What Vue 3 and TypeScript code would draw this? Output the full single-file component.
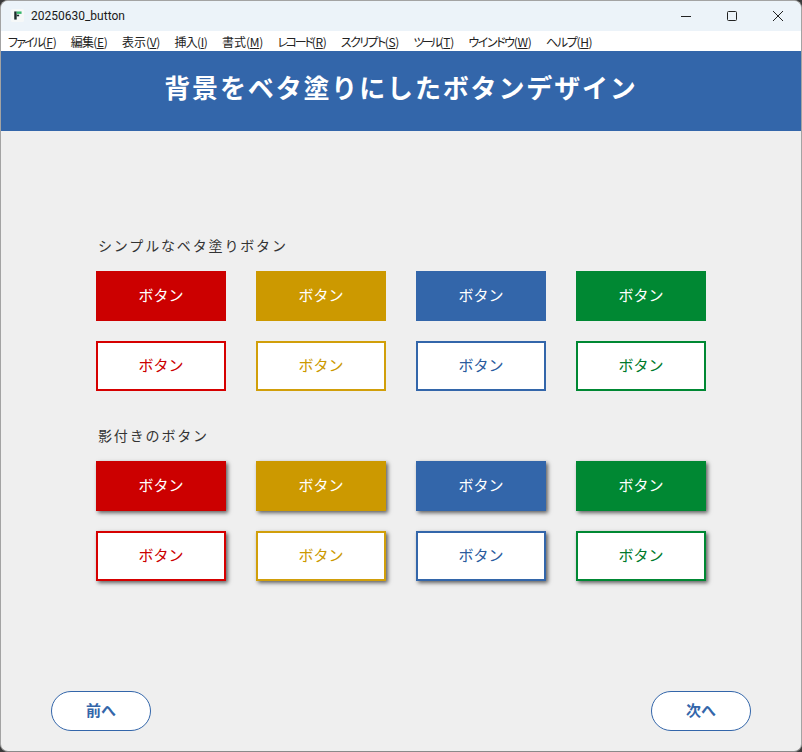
<script setup lang="ts">
const menus = [
  { label: 'ファイル', key: 'F', squeeze: -1.75 },
  { label: '編集', key: 'E', squeeze: -0.8 },
  { label: '表示', key: 'V', squeeze: 0 },
  { label: '挿入', key: 'I', squeeze: -0.8 },
  { label: '書式', key: 'M', squeeze: 0 },
  { label: 'レコード', key: 'R', squeeze: -2.25 },
  { label: 'スクリプト', key: 'S', squeeze: -1.6 },
  { label: 'ツール', key: 'T', squeeze: -2.67 },
  { label: 'ウインドウ', key: 'W', squeeze: -1.4 },
  { label: 'ヘルプ', key: 'H', squeeze: -1.3 }
];

const colors = ['red', 'gold', 'blue', 'green'];

const sections = [
  { title: 'シンプルなベタ塗りボタン', shadow: false },
  { title: '影付きのボタン', shadow: true }
];
</script>

<template>
  <div class="window">
    <div class="titlebar">
      <svg class="app-icon" width="13" height="13" viewBox="0 0 16 16">
        <rect width="16" height="16" rx="2" fill="#f6f8f8" />
        <rect x="4" y="3" width="3" height="10" fill="#1c2a2a" />
        <rect x="7" y="7" width="3" height="2" fill="#1c2a2a" />
        <rect x="7" y="3" width="6" height="3" fill="#35b56a" />
      </svg>
      <span class="app-title">20250630_button</span>
      <div class="controls">
        <svg width="12" height="12" viewBox="0 0 12 12"><path d="M1 6.5h10" stroke="#222" fill="none" /></svg>
        <svg width="12" height="12" viewBox="0 0 12 12"><rect x="1.5" y="1.5" width="9" height="9" rx="1" stroke="#222" fill="none" /></svg>
        <svg width="12" height="12" viewBox="0 0 12 12"><path d="M1 1l10 10M11 1L1 11" stroke="#222" fill="none" /></svg>
      </div>
    </div>

    <nav class="menubar">
      <span v-for="m in menus" :key="m.key" class="menu-item"><span :style="{ letterSpacing: m.squeeze + 'px' }">{{ m.label }}</span>(<u>{{ m.key }}</u>)</span>
    </nav>

    <header class="page-header">
      <h1>背景をベタ塗りにしたボタンデザイン</h1>
    </header>

    <main class="content">
      <section v-for="s in sections" :key="s.title" class="group">
        <h2>{{ s.title }}</h2>
        <div class="grid" :class="{ shadowed: s.shadow }">
          <button v-for="c in colors" :key="'f' + c" class="btn filled" :class="c">ボタン</button>
          <button v-for="c in colors" :key="'o' + c" class="btn outline" :class="c">ボタン</button>
        </div>
      </section>
    </main>

    <footer class="pager">
      <button class="pill">前へ</button>
      <button class="pill">次へ</button>
    </footer>
  </div>
</template>

<style>
html, body { background: #3a3a3a; }
</style>

<style scoped>
.window {
  box-sizing: border-box;
  width: 802px;
  height: 752px;
  display: flex;
  flex-direction: column;
  background: #efefef;
  border: 1px solid #a3a3a3;
  border-bottom-color: #8a8a8a;
  border-radius: 8px;
  overflow: hidden;
  font-family: "Noto Sans CJK JP", "Liberation Sans", sans-serif;
}
.titlebar {
  height: 30px;
  display: flex;
  align-items: center;
  padding-left: 10px;
  padding-bottom: 1px;
  box-sizing: border-box;
  background: #ecf3f9;
  flex: none;
}
.app-icon { margin-right: 7px; }
.app-title {
  font-family: "Roboto", "Liberation Sans", sans-serif;
  font-size: 12px;
  color: #1a1a1a;
}
.controls {
  margin-left: auto;
  display: flex;
  gap: 34px;
  padding-right: 17px;
}
.menubar {
  height: 20px;
  display: flex;
  align-items: center;
  padding-left: 7px;
  gap: 14.4px;
  background: #fff;
  font-size: 12px;
  font-feature-settings: "palt";
  letter-spacing: -0.3px;
  color: #222;
  flex: none;
}
.menu-item { white-space: nowrap; }
.page-header {
  box-sizing: border-box;
  height: 80px;
  padding-bottom: 10px;
  display: flex;
  align-items: center;
  justify-content: center;
  background: #3366aa;
  flex: none;
}
h1 {
  margin: 0;
  font-size: 26px;
  font-weight: 700;
  letter-spacing: 1.85px;
  color: #fff;
}
.content {
  flex: 1;
  padding: 102px 0 0 95px;
  display: flex;
  flex-direction: column;
  gap: 32px;
}
h2 {
  margin: 0 0 14px 2px;
  height: 24px;
  line-height: 24px;
  font-size: 14px;
  font-weight: 400;
  letter-spacing: 1.85px;
  color: #333;
}
.grid {
  display: grid;
  grid-template-columns: repeat(4, 130px);
  column-gap: 30px;
  row-gap: 20px;
}
.btn {
  box-sizing: border-box;
  width: 130px;
  height: 50px;
  padding: 0 0 4px;
  border: 2px solid;
  border-radius: 0;
  font-family: inherit;
  font-size: 15px;
}
.filled { color: #fff; }
.filled.red { background: #cc0000; border-color: #cc0000; }
.filled.gold { background: #cc9900; border-color: #cc9900; }
.filled.blue { background: #3366aa; border-color: #3366aa; }
.filled.green { background: #008833; border-color: #008833; }
.outline { background: #fff; }
.outline.red { color: #cc0000; border-color: #d60000; }
.outline.gold { color: #cc9900; border-color: #d19f0a; }
.outline.blue { color: #2b5c9e; border-color: #3366aa; }
.outline.green { color: #007a2c; border-color: #008833; }
.shadowed .btn { box-shadow: 2px 2px 4px rgba(0, 0, 0, 0.6); }
.pager {
  display: flex;
  justify-content: space-between;
  padding: 0 50px 20px;
  flex: none;
}
.pill {
  box-sizing: border-box;
  width: 100px;
  height: 40px;
  padding: 0 0 3px;
  background: #fff;
  border: 1px solid #3366aa;
  border-radius: 20px;
  color: #3366aa;
  font-family: inherit;
  font-size: 15px;
  font-weight: 700;
}
</style>
